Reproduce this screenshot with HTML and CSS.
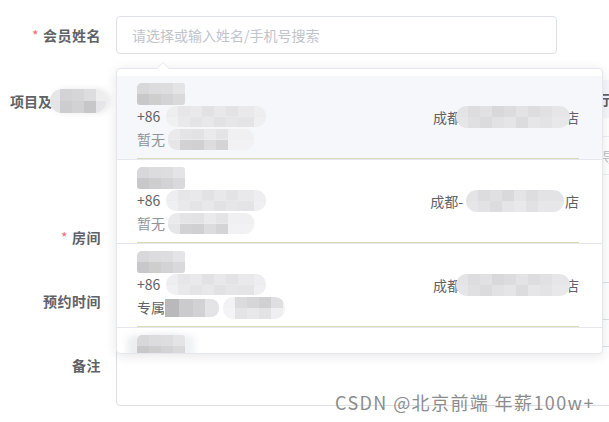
FILE: index.html
```html
<!DOCTYPE html>
<html lang="zh-CN">
<head>
<meta charset="utf-8">
<title>会员预约</title>
<link rel="stylesheet" href="styles.css">
</head>
<body>
<div class="form">
  <div class="row">
    <div class="label"><span class="req">*</span>会员姓名</div>
    <div class="input w440"><span class="ph">请选择或输入姓名/手机号搜索</span></div>
  </div>
  <div class="row">
    <div class="label label-proj">项目及<span class="mz mz-label"></span></div>
    <div class="table">
      <div class="thead"><span class="th-text">执行</span></div>
      <div class="tgap"></div>
      <div class="trow"><span class="td-text">导入</span></div>
      <div class="tend"></div>
    </div>
  </div>
  <div class="row">
    <div class="label"><span class="req">*</span>房间</div>
    <div class="input w440"></div>
  </div>
  <div class="row">
    <div class="label">预约时间</div>
    <div class="input w520"></div>
  </div>
  <div class="row">
    <div class="label">备注</div>
    <div class="textarea"></div>
  </div>
</div>

<div class="dropdown">
  <span class="arrow"></span>
  <div class="list">
    <div class="item hover">
      <div class="inner">
        <div class="left">
          <div class="l1"><span class="mz mz-name"></span></div>
          <div class="l2">+86<span class="mz mz-phone"></span></div>
          <div class="l3 muted">暂无<span class="mz mz-note"></span></div>
        </div>
        <div class="right">成都<span class="mz mz-store m-cover"></span><span class="m-cover2">店</span></div>
      </div>
    </div>
    <div class="item">
      <div class="inner">
        <div class="left">
          <div class="l1"><span class="mz mz-name"></span></div>
          <div class="l2">+86<span class="mz mz-phone"></span></div>
          <div class="l3 muted">暂无<span class="mz mz-note"></span></div>
        </div>
        <div class="right">成都-<span class="mz mz-store2"></span>店</div>
      </div>
    </div>
    <div class="item">
      <div class="inner">
        <div class="left">
          <div class="l1"><span class="mz mz-name"></span></div>
          <div class="l2">+86<span class="mz mz-phone"></span></div>
          <div class="l3">专属<span class="mz mz-vip"></span><span class="mz mz-vip2"></span></div>
        </div>
        <div class="right">成都<span class="mz mz-store m-cover"></span><span class="m-cover2">店</span></div>
      </div>
    </div>
    <div class="item">
      <div class="inner">
        <div class="left">
          <div class="l1"><span class="mz mz-name mz-halo"></span></div>
        </div>
      </div>
    </div>
  </div>
</div>

<div class="watermark">CSDN @北京前端 年薪100w+</div>
</body>
</html>
```

FILE: styles.css
```css
html, body {
  margin: 0;
  padding: 0;
}
body {
  width: 609px;
  height: 422px;
  overflow: hidden;
  position: relative;
  background: #fff;
  font-family: "Noto Sans CJK SC", "Microsoft YaHei", sans-serif;
  font-size: 14px;
  color: #606266;
}

.form {
  padding-top: 16px;
}
.row {
  display: flex;
  align-items: flex-start;
  margin-bottom: 26px;
}
.label {
  width: 116px;
  flex: none;
  box-sizing: border-box;
  padding-right: 15px;
  text-align: right;
  font-weight: bold;
  line-height: 38px;
  white-space: nowrap;
  letter-spacing: 0.5px;
}
.label-proj {
  padding-top: 1px;
  padding-left: 10px;
  padding-right: 0;
  text-align: left;
  display: flex;
  align-items: center;
  height: 40px;
  letter-spacing: 0;
}
.req {
  color: #f56c6c;
  margin-right: 4px;
  font-weight: normal;
}

.input {
  flex: none;
  height: 38px;
  box-sizing: border-box;
  border: 1px solid #dcdfe6;
  border-radius: 4px;
  padding: 0 15px;
  line-height: 36px;
  background: #fff;
}
.w440 { width: 441px; }
.w520 { width: 520px; }
.ph { color: #c0c4cc; }

.textarea {
  flex: none;
  width: 520px;
  height: 60px;
  box-sizing: border-box;
  border: 1px solid #dcdfe6;
  border-radius: 4px;
}

.table {
  flex: none;
  width: 520px;
}
.thead {
  height: 38px;
  background: #f5f7fa;
  display: flex;
  justify-content: flex-end;
  align-items: center;
  padding-right: 26px;
  font-weight: bold;
  color: #606266;
}
.tgap {
  height: 18px;
  border-bottom: 1px solid #ebeef5;
}
.trow {
  height: 37px;
  border-bottom: 1px solid #ebeef5;
  display: flex;
  align-items: center;
  padding-left: 486px;
  color: #c0c4cc;
}
.tend { height: 17px; }

/* dropdown */
.dropdown {
  position: absolute;
  left: 116px;
  top: 68px;
  width: 487px;
  height: 286px;
  box-sizing: border-box;
  border: 1px solid #e4e7ed;
  border-radius: 4px;
  background: #fff;
  box-shadow: 0 2px 12px 0 rgba(0, 0, 0, 0.1);
}
.arrow {
  position: absolute;
  top: -7px;
  left: 40px;
  width: 0;
  height: 0;
  border: 6px solid transparent;
  border-top-width: 0;
  border-bottom-color: #e4e7ed;
}
.arrow::after {
  content: "";
  position: absolute;
  top: 1px;
  left: -6px;
  width: 0;
  height: 0;
  border: 6px solid transparent;
  border-top-width: 0;
  border-bottom-color: #fff;
}
.list {
  height: 100%;
  overflow: hidden;
  box-sizing: border-box;
  padding-top: 7px;
  border-radius: 4px;
}
.item {
  padding-top: 7px;
  border-bottom: 1px solid #e4e7ed;
}
.item.hover {
  background: #f5f7fa;
}
.inner {
  margin: 0 23px 0 20px;
  padding-bottom: 7px;
  border-bottom: 1px solid #dcd9b5;
  display: flex;
  justify-content: space-between;
  align-items: center;
}
.left .l1 {
  height: 22px;
  line-height: 22px;
}
.left .l2, .left .l3 {
  height: 23px;
  line-height: 23px;
  display: flex;
  align-items: center;
  white-space: nowrap;
}
.muted { color: #909399; }
.right {
  display: flex;
  align-items: center;
  white-space: nowrap;
  line-height: 22px;
}

/* mosaic blurs */
.mz {
  display: inline-block;
  vertical-align: top;
  background-repeat: no-repeat;
  background-size: 100% 50%;
  background-position: 0 0, 0 100%;
}
.mz-label {
  width: 56px;
  height: 24px;
  margin-left: -2px;
  border-radius: 12px;
  background-color: #eeeeef;
  box-shadow: 4px 0 5px 1px rgba(236, 236, 238, 0.9);
  background-image:
    linear-gradient(90deg, #e6e6e8 0 10px, #d3d3d5 10px 22px, #d6d6d8 22px 34px, #dddddf 34px 46px, #eeeeef 46px),
    linear-gradient(90deg, #e4e4e6 0 10px, #cdcdcf 10px 22px, #d2d2d4 22px 34px, #c7c7c9 34px 46px, #e6e6e8 46px);
}
.mz-name {
  width: 48px;
  height: 22px;
  border-radius: 5px 3px 3px 3px;
  background-image:
    linear-gradient(90deg, #d8d8da 0 12px, #dcdcde 12px 24px, #dddddf 24px 36px, #e4e4e6 36px),
    linear-gradient(90deg, #c8c8ca 0 12px, #cececf 12px 24px, #d3d3d5 24px 36px, #d9d9db 36px);
}
.mz-halo {
  box-shadow: -8px 2px 6px 2px rgba(235, 236, 240, 0.9), 8px 2px 6px 2px rgba(240, 241, 244, 0.9);
}
.mz-phone {
  width: 100px;
  height: 21px;
  margin-left: 6px;
  border-radius: 10px;
  background-color: #ebebed;
  background-image:
    linear-gradient(90deg, #eeeef0 0 12px, #e6e6e8 12px 24px, #e9e9eb 24px 36px, #e2e2e4 36px 48px, #e8e8ea 48px 60px, #e3e3e5 60px 72px, #e9e9eb 72px 88px, #eeeef0 88px),
    linear-gradient(90deg, #f0f0f2 0 12px, #e9e9eb 12px 24px, #e4e4e6 24px 36px, #e8e8ea 36px 48px, #e2e2e4 48px 60px, #e6e6e8 60px 72px, #e4e4e6 72px 88px, #efeff1 88px);
}
.mz-note {
  width: 86px;
  height: 21px;
  margin-left: 3px;
  border-radius: 9px;
  background-color: #eeeef0;
  background-image:
    linear-gradient(90deg, #eaeaec 0 12px, #e4e4e6 12px 24px, #e2e2e4 24px 36px, #eaeaec 36px 48px, #e4e4e6 48px 60px, #f0f0f2 60px),
    linear-gradient(90deg, #e6e6e8 0 12px, #d2d2d4 12px 24px, #d0d0d2 24px 36px, #dcdcde 36px 48px, #d4d4d6 48px 60px, #f2f2f4 60px);
}
.mz-vip {
  width: 54px;
  height: 18px;
  border-radius: 0 8px 8px 0;
  background-size: 100% 100%;
  background-image:
    linear-gradient(90deg, #b9b9bb 0 14px, #cbcbcd 14px 28px, #d2d2d4 28px 40px, #e4e4e6 40px),
    none;
}
.mz-vip2 {
  width: 62px;
  height: 22px;
  margin-left: 4px;
  border-radius: 10px;
  background-color: #f2f2f4;
  background-image:
    linear-gradient(90deg, #f2f2f4 0 12px, #dbdbdd 12px 24px, #d6d6d8 24px 36px, #d0d0d2 36px 48px, #dfdfe1 48px 60px, #f4f4f6 60px),
    linear-gradient(90deg, #f4f4f6 0 12px, #e4e4e6 12px 24px, #e8e8ea 24px 36px, #e3e3e5 36px 48px, #efeff1 48px 60px, #f4f4f6 60px);
}
.mz-store {
  width: 114px;
  height: 22px;
  border-radius: 11px;
  background-color: #e2e2e4;
  background-image:
    linear-gradient(90deg, #e4e4e6 0 12px, #dddddf 12px 24px, #e1e1e3 24px 36px, #d8d8da 36px 48px, #dcdcde 48px 60px, #e3e3e5 60px 72px, #dddddf 72px 84px, #e1e1e3 84px 96px, #e6e6e8 96px),
    linear-gradient(90deg, #e6e6e8 0 12px, #e0e0e2 12px 24px, #dbdbdd 24px 36px, #e2e2e4 36px 48px, #e5e5e7 48px 60px, #dcdcde 60px 72px, #e6e6e8 72px 84px, #e3e3e5 84px 96px, #e8e8ea 96px);
}
.mz-store2 {
  width: 98px;
  height: 22px;
  margin-left: 3px;
  margin-right: 1px;
  border-radius: 11px;
  background-color: #e3e3e5;
  background-image:
    linear-gradient(90deg, #e4e4e6 0 12px, #dcdcde 12px 24px, #e0e0e2 24px 36px, #d9d9db 36px 48px, #e4e4e6 48px 60px, #dddddf 60px 72px, #e3e3e5 72px),
    linear-gradient(90deg, #e6e6e8 0 12px, #e2e2e4 12px 24px, #dcdcde 24px 36px, #e5e5e7 36px 48px, #e9e9eb 48px 60px, #e1e1e3 60px 72px, #e7e7e9 72px);
}
.m-cover {
  margin-left: -5px;
  position: relative;
  z-index: 1;
}
.m-cover2 {
  margin-left: -5px;
}

.watermark {
  position: absolute;
  left: 335px;
  top: 392px;
  line-height: 20px;
  font-size: 18px;
  letter-spacing: 1.4px;
  color: #8c8c8c;
  text-shadow: 0 0 1px #fff;
  white-space: nowrap;
}
```
